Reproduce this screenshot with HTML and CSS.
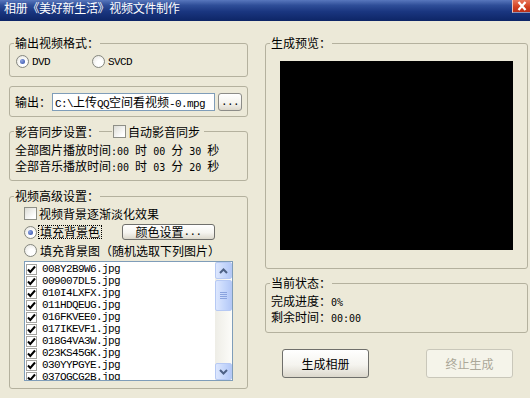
FILE: index.html
```html
<!DOCTYPE html>
<html lang="zh-CN">
<head>
<meta charset="utf-8">
<title>相册《美好新生活》视频文件制作</title>
<link rel="stylesheet" href="styles.css">
</head>
<body>
<div class="titlebar">
  <span class="title">相册《美好新生活》视频文件制作</span>
  <span class="close"><svg width="12" height="10" viewBox="0 0 12 10"><path d="M2.5 1 L9.5 9 M9.5 1 L2.5 9" stroke="#fff" stroke-width="2.2" fill="none"/></svg></span>
</div>
<div class="client">
  <div class="col-left">
    <fieldset class="group g-format">
      <legend>输出视频格式&#xFF1A;</legend>
      <div class="gbody row">
        <span class="opt opt-dvd"><span class="radio on"></span><span class="m">DVD</span></span>
        <span class="opt"><span class="radio"></span><span class="m">SVCD</span></span>
      </div>
    </fieldset>

    <fieldset class="group g-out">
      <div class="gbody row">
        <span class="out-label">输出&#xFF1A;</span>
        <span class="textbox"><span class="m">C:\</span>上传<span class="m">QQ</span>空间看视频<span class="m">-0.mpg</span></span>
        <span class="btn btn-small"><span class="m">...</span></span>
      </div>
    </fieldset>

    <fieldset class="group g-sync">
      <legend class="legend-check"><span>影音同步设置&#xFF1A;</span><span class="legline"></span><span class="check"></span><span class="check-label">自动影音同步</span></legend>
      <div class="gbody lines">
        <div>全部图片播放时间<span class="a">:00 </span>时<span class="a"> 00 </span>分<span class="a"> 30 </span>秒</div>
        <div>全部音乐播放时间<span class="a">:00 </span>时<span class="a"> 03 </span>分<span class="a"> 20 </span>秒</div>
      </div>
    </fieldset>

    <fieldset class="group g-adv">
      <legend>视频高级设置&#xFF1A;</legend>
      <div class="gbody adv">
        <div class="row crow"><span class="check"></span><span class="check-label">视频背景逐渐淡化效果</span></div>
        <div class="row rrow1"><span class="radio on"></span><span class="focus">填充背景色</span><span class="btn btn-color">颜色设置<span class="m">...</span></span></div>
        <div class="row rrow2"><span class="radio"></span><span class="radio-label">填充背景图&#xFF08;随机选取下列图片&#xFF09;</span></div>
        <div class="listbox">
          <div class="items">
            <div class="item"><span class="lcb"><svg width="9" height="9" viewBox="0 0 9 9"><path d="M1 4.5 L3.3 7 L8 1.5" stroke="#000" stroke-width="2" fill="none"/></svg></span><span class="m">008Y2B9W6.jpg</span></div>
            <div class="item"><span class="lcb"><svg width="9" height="9" viewBox="0 0 9 9"><path d="M1 4.5 L3.3 7 L8 1.5" stroke="#000" stroke-width="2" fill="none"/></svg></span><span class="m">009007DL5.jpg</span></div>
            <div class="item"><span class="lcb"><svg width="9" height="9" viewBox="0 0 9 9"><path d="M1 4.5 L3.3 7 L8 1.5" stroke="#000" stroke-width="2" fill="none"/></svg></span><span class="m">010I4LXFX.jpg</span></div>
            <div class="item"><span class="lcb"><svg width="9" height="9" viewBox="0 0 9 9"><path d="M1 4.5 L3.3 7 L8 1.5" stroke="#000" stroke-width="2" fill="none"/></svg></span><span class="m">011HDQEUG.jpg</span></div>
            <div class="item"><span class="lcb"><svg width="9" height="9" viewBox="0 0 9 9"><path d="M1 4.5 L3.3 7 L8 1.5" stroke="#000" stroke-width="2" fill="none"/></svg></span><span class="m">016FKVEE0.jpg</span></div>
            <div class="item"><span class="lcb"><svg width="9" height="9" viewBox="0 0 9 9"><path d="M1 4.5 L3.3 7 L8 1.5" stroke="#000" stroke-width="2" fill="none"/></svg></span><span class="m">017IKEVF1.jpg</span></div>
            <div class="item"><span class="lcb"><svg width="9" height="9" viewBox="0 0 9 9"><path d="M1 4.5 L3.3 7 L8 1.5" stroke="#000" stroke-width="2" fill="none"/></svg></span><span class="m">018G4VA3W.jpg</span></div>
            <div class="item"><span class="lcb"><svg width="9" height="9" viewBox="0 0 9 9"><path d="M1 4.5 L3.3 7 L8 1.5" stroke="#000" stroke-width="2" fill="none"/></svg></span><span class="m">023KS45GK.jpg</span></div>
            <div class="item"><span class="lcb"><svg width="9" height="9" viewBox="0 0 9 9"><path d="M1 4.5 L3.3 7 L8 1.5" stroke="#000" stroke-width="2" fill="none"/></svg></span><span class="m">030YYPGYE.jpg</span></div>
            <div class="item"><span class="lcb"><svg width="9" height="9" viewBox="0 0 9 9"><path d="M1 4.5 L3.3 7 L8 1.5" stroke="#000" stroke-width="2" fill="none"/></svg></span><span class="m">037QGCG2B.jpg</span></div>
          </div>
          <div class="vscroll">
            <span class="sb-btn"><svg width="9" height="6" viewBox="0 0 9 6"><path d="M1 5 L4.5 1.5 L8 5" stroke="#4D6185" stroke-width="2" fill="none"/></svg></span>
            <span class="sb-thumb"><svg width="7" height="7" viewBox="0 0 7 7"><path d="M0 0.5 H7 M0 2.5 H7 M0 4.5 H7 M0 6.5 H7" stroke="#8AA3DE" stroke-width="1"/></svg></span>
            <span class="sb-space"></span>
            <span class="sb-btn"><svg width="9" height="6" viewBox="0 0 9 6"><path d="M1 1 L4.5 4.5 L8 1" stroke="#4D6185" stroke-width="2" fill="none"/></svg></span>
          </div>
        </div>
      </div>
    </fieldset>
  </div>

  <div class="col-right">
    <fieldset class="group g-preview">
      <legend>生成预览&#xFF1A;</legend>
      <div class="gbody"><div class="screen"></div></div>
    </fieldset>

    <fieldset class="group g-status">
      <legend>当前状态&#xFF1A;</legend>
      <div class="gbody lines">
        <div>完成进度&#xFF1A;<span class="a">0%</span></div>
        <div>剩余时间&#xFF1A;<span class="a">00:00</span></div>
      </div>
    </fieldset>

    <div class="actions">
      <span class="btn btn-big">生成相册</span>
      <span class="btn btn-big disabled">终止生成</span>
    </div>
  </div>
</div>
</body>
</html>
```

FILE: styles.css
```css
* { box-sizing: border-box; }
html, body { margin: 0; padding: 0; }
body {
  width: 530px;
  height: 398px;
  overflow: hidden;
  background: #ECE9D8;
  font-family: "Noto Sans CJK SC", sans-serif;
  font-size: 12px;
  line-height: 12px;
  color: #000;
}

/* ascii helpers */
.m {
  font-family: "Liberation Mono", monospace;
  font-size: 11px;
  letter-spacing: -0.6px;
}
.a {
  font-family: "DejaVu Sans Mono", monospace;
  font-size: 10px;
  white-space: pre;
}

/* title bar */
.titlebar {
  height: 21px;
  display: flex;
  justify-content: space-between;
  align-items: flex-start;
  padding-left: 4px;
  color: #fff;
  background: linear-gradient(to bottom, #5877BD 0%, #2F4E98 25%, #1A3680 55%, #0D2566 100%);
}
.title { margin-top: 2px; line-height: 12px; letter-spacing: -0.3px; }
.close {
  width: 18px;
  height: 13px;
  display: flex;
  align-items: center;
  justify-content: center;
  background: linear-gradient(to bottom, #E8765A, #D13F1E 60%, #B8301A);
  border-left: 1px solid #F3C2B4;
  border-bottom: 1px solid #8A90B8;
}

/* layout */
.client {
  display: flex;
  gap: 17px;
  padding: 16px 0 0 9px;
}
.col-left { width: 239px; display: flex; flex-direction: column; }
.col-right { width: 263px; display: flex; flex-direction: column; }

/* group boxes */
.group {
  margin: 0;
  padding: 0;
  min-width: 0;
  border: 1px solid #B4B19E;
  border-radius: 3px;
}
.group > legend {
  margin-left: 4px;
  padding: 0 1px;
  line-height: 12px;
  height: 12px;
}
.row { display: flex; align-items: center; }

.g-format .gbody { padding: 6px 0 8px 6px; }
.opt { display: flex; align-items: center; gap: 3px; }
.opt-dvd { width: 76px; }

.group.g-out { margin-top: 9px; }
.g-out .gbody { padding: 6px 0 5px 5px; }
.out-label { width: 37px; }
.textbox {
  width: 163px;
  height: 18px;
  padding-left: 2px;
  line-height: 16px;
  background: #fff;
  border: 1px solid #7F9DB9;
  white-space: nowrap;
  overflow: hidden;
}
.btn-small { margin-left: 3px; width: 24px; height: 18px; }

.group.g-sync { margin-top: 8px; }
.group > .legend-check { display: flex; align-items: center; height: 13px; padding: 0 4px 0 1px; }
.legline { width: 13px; height: 1px; background: #B4B19E; margin-right: 1px; }
.check-label { margin-left: 2px; }
.lines { padding: 4px 0 6px 5px; }
.lines > div { height: 16px; line-height: 16px; white-space: nowrap; }

.group.g-adv { margin-top: 9px; }
.adv { padding: 5px 0 7px 14px; display: flex; flex-direction: column; gap: 4px; }
.crow { height: 13px; }
.rrow1 { height: 16px; }
.rrow2 { height: 13px; }
.radio-label { margin-left: 3px; white-space: nowrap; }
.focus {
  margin-left: 1px;
  padding: 0 1px;
  border: 1px dotted #000;
  line-height: 12px;
}
.btn-color { margin-left: 20px; width: 93px; height: 16px; }

/* controls */
.radio {
  width: 13px;
  height: 13px;
  flex: none;
  border-radius: 50%;
  border: 1px solid #85877F;
  background: radial-gradient(circle at 60% 65%, #FFFFFF 30%, #E2E1DA 100%);
  display: flex;
  align-items: center;
  justify-content: center;
}
.radio.on::after {
  content: "";
  width: 5px;
  height: 5px;
  border-radius: 50%;
  background: radial-gradient(circle at 35% 35%, #8FA4E0, #2D4BA6);
}
.check {
  width: 13px;
  height: 13px;
  flex: none;
  border: 1px solid #8E8F87;
  background: linear-gradient(135deg, #DCDCD5, #FFFFFF 80%);
}

.btn {
  display: flex;
  align-items: center;
  justify-content: center;
  border: 1px solid #6F6F6B;
  border-radius: 3px;
  background: linear-gradient(to bottom, #FFFFFF 0%, #F5F4EF 55%, #DCD8CC 100%);
  white-space: nowrap;
}
.btn-small { border-color: #8C8C88; }

/* list box */
.listbox {
  width: 209px;
  height: 120px;
  border: 1px solid #7F9DB9;
  background: #fff;
  display: flex;
  overflow: hidden;
}
.items { flex: 1; padding-top: 1px; overflow: hidden; }
.item { height: 12px; display: flex; align-items: center; padding-left: 1px; white-space: nowrap; }
.lcb {
  width: 11px;
  height: 11px;
  flex: none;
  border: 1px solid #A4A4A0;
  display: flex;
  align-items: center;
  justify-content: center;
  margin-right: 5px;
}
.vscroll {
  width: 17px;
  flex: none;
  display: flex;
  flex-direction: column;
  background: linear-gradient(to right, #EEEDE6, #FCFCF9);
}
.sb-btn, .sb-thumb {
  border: 1px solid #B6C9F4;
  border-radius: 2px;
  background: linear-gradient(to right, #DDE7FE, #C3D5FB 60%, #B4C8F7);
  display: flex;
  align-items: center;
  justify-content: center;
}
.sb-btn { height: 17px; }
.sb-thumb { height: 31px; margin-top: 1px; }
.sb-space { flex: 1; }

/* right side */
.g-preview .gbody { padding: 12px 13px 18px 14px; }
.screen { width: 233px; height: 189px; background: #000; }
.group.g-status { margin-top: 8px; }
.g-status .lines { padding: 4px 0 7px 5px; }

.actions { display: flex; margin-top: 16px; padding-left: 17px; gap: 57px; }
.btn-big { width: 87px; height: 29px; }
.btn.disabled {
  color: #ACA899;
  border-color: #C9C7BA;
  background: #F5F4EA;
}
```
